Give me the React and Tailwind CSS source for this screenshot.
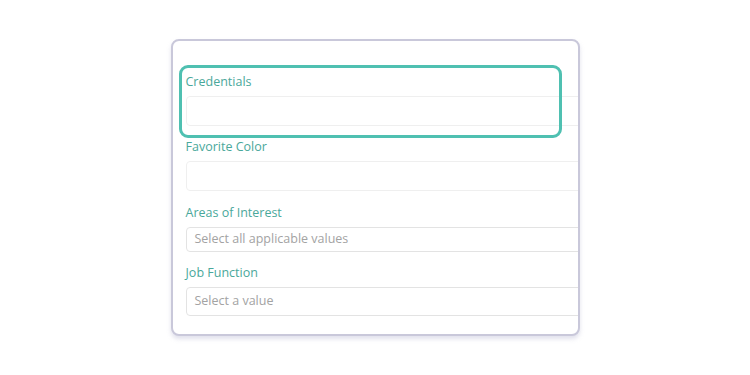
const fields = [
  { label: 'Credentials', placeholder: '', h: 'h-[30px]', border: 'border-[#efefef]', mt: 'mt-0' },
  { label: 'Favorite Color', placeholder: '', h: 'h-[30px]', border: 'border-[#efefef]', mt: 'mt-[13px]' },
  { label: 'Areas of Interest', placeholder: 'Select all applicable values', h: 'h-[25px]', border: 'border-[#e3e3e3]', mt: 'mt-[14px]' },
  { label: 'Job Function', placeholder: 'Select a value', h: 'h-[29px]', border: 'border-[#e3e3e3]', mt: 'mt-[13px]' },
]

export default function App() {
  return (
    <div className="w-[750px] h-[375px] bg-white flex items-center justify-center font-['Open_Sans',sans-serif]">
      <div className="relative w-[409px] h-[297px] rounded-[8px] border-2 border-[#c9c8da] bg-white overflow-hidden shadow-[0_3px_4px_rgba(170,170,200,0.35)]">
        <div className="w-[480px] pl-[13px] pt-[33px]">
          {fields.map((f) => (
            <div key={f.label} className={f.mt}>
              <p className="text-[12.5px] leading-[16px] text-[#4aa89b]">{f.label}</p>
              <div className={`mt-[6px] ${f.h} rounded-[4px] border ${f.border} flex items-center pl-[8px] text-[12.5px] text-[#a3a3a3]`}>
                {f.placeholder}
              </div>
            </div>
          ))}
        </div>
        {/* highlight around the first field */}
        <div className="absolute left-[6px] top-[24px] w-[383px] h-[73px] rounded-[9px] border-[3px] border-[#4fc0b1]" />
      </div>
    </div>
  )
}
